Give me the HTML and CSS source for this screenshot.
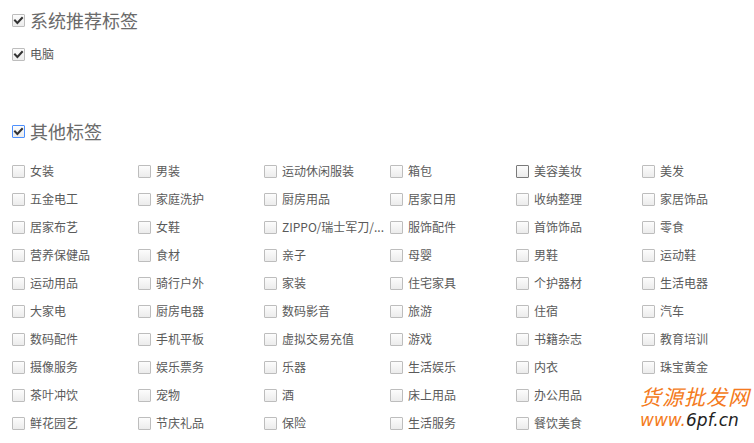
FILE: index.html
```html
<!DOCTYPE html>
<html lang="zh">
<head>
<meta charset="utf-8">
<link rel="stylesheet" href="styles.css">
</head>
<body>
<div class="page">
  <section class="sec sec-rec">
    <div class="head">
      <span class="cb checked"><svg viewBox="0 0 13 13"><path d="M3 6.5 L5.4 9 L10 4" /></svg></span>
      <span class="head-text">系统推荐标签</span>
    </div>
    <div class="item rec-item">
      <span class="cb checked"><svg viewBox="0 0 13 13"><path d="M3 6.5 L5.4 9 L10 4" /></svg></span>
      <span class="label">电脑</span>
    </div>
  </section>

  <section class="sec sec-other">
    <div class="head">
      <span class="cb checked focus"><svg viewBox="0 0 13 13"><path d="M3 6.5 L5.4 9 L10 4" /></svg></span>
      <span class="head-text">其他标签</span>
    </div>
    <div class="grid">
      <div class="item"><span class="cb"></span><span class="label">女装</span></div>
      <div class="item"><span class="cb"></span><span class="label">男装</span></div>
      <div class="item"><span class="cb"></span><span class="label">运动休闲服装</span></div>
      <div class="item"><span class="cb"></span><span class="label">箱包</span></div>
      <div class="item"><span class="cb hover"></span><span class="label">美容美妆</span></div>
      <div class="item"><span class="cb"></span><span class="label">美发</span></div>

      <div class="item"><span class="cb"></span><span class="label">五金电工</span></div>
      <div class="item"><span class="cb"></span><span class="label">家庭洗护</span></div>
      <div class="item"><span class="cb"></span><span class="label">厨房用品</span></div>
      <div class="item"><span class="cb"></span><span class="label">居家日用</span></div>
      <div class="item"><span class="cb"></span><span class="label">收纳整理</span></div>
      <div class="item"><span class="cb"></span><span class="label">家居饰品</span></div>

      <div class="item"><span class="cb"></span><span class="label">居家布艺</span></div>
      <div class="item"><span class="cb"></span><span class="label">女鞋</span></div>
      <div class="item"><span class="cb"></span><span class="label">ZIPPO/瑞士军刀/...</span></div>
      <div class="item"><span class="cb"></span><span class="label">服饰配件</span></div>
      <div class="item"><span class="cb"></span><span class="label">首饰饰品</span></div>
      <div class="item"><span class="cb"></span><span class="label">零食</span></div>

      <div class="item"><span class="cb"></span><span class="label">营养保健品</span></div>
      <div class="item"><span class="cb"></span><span class="label">食材</span></div>
      <div class="item"><span class="cb"></span><span class="label">亲子</span></div>
      <div class="item"><span class="cb"></span><span class="label">母婴</span></div>
      <div class="item"><span class="cb"></span><span class="label">男鞋</span></div>
      <div class="item"><span class="cb"></span><span class="label">运动鞋</span></div>

      <div class="item"><span class="cb"></span><span class="label">运动用品</span></div>
      <div class="item"><span class="cb"></span><span class="label">骑行户外</span></div>
      <div class="item"><span class="cb"></span><span class="label">家装</span></div>
      <div class="item"><span class="cb"></span><span class="label">住宅家具</span></div>
      <div class="item"><span class="cb"></span><span class="label">个护器材</span></div>
      <div class="item"><span class="cb"></span><span class="label">生活电器</span></div>

      <div class="item"><span class="cb"></span><span class="label">大家电</span></div>
      <div class="item"><span class="cb"></span><span class="label">厨房电器</span></div>
      <div class="item"><span class="cb"></span><span class="label">数码影音</span></div>
      <div class="item"><span class="cb"></span><span class="label">旅游</span></div>
      <div class="item"><span class="cb"></span><span class="label">住宿</span></div>
      <div class="item"><span class="cb"></span><span class="label">汽车</span></div>

      <div class="item"><span class="cb"></span><span class="label">数码配件</span></div>
      <div class="item"><span class="cb"></span><span class="label">手机平板</span></div>
      <div class="item"><span class="cb"></span><span class="label">虚拟交易充值</span></div>
      <div class="item"><span class="cb"></span><span class="label">游戏</span></div>
      <div class="item"><span class="cb"></span><span class="label">书籍杂志</span></div>
      <div class="item"><span class="cb"></span><span class="label">教育培训</span></div>

      <div class="item"><span class="cb"></span><span class="label">摄像服务</span></div>
      <div class="item"><span class="cb"></span><span class="label">娱乐票务</span></div>
      <div class="item"><span class="cb"></span><span class="label">乐器</span></div>
      <div class="item"><span class="cb"></span><span class="label">生活娱乐</span></div>
      <div class="item"><span class="cb"></span><span class="label">内衣</span></div>
      <div class="item"><span class="cb"></span><span class="label">珠宝黄金</span></div>

      <div class="item"><span class="cb"></span><span class="label">茶叶冲饮</span></div>
      <div class="item"><span class="cb"></span><span class="label">宠物</span></div>
      <div class="item"><span class="cb"></span><span class="label">酒</span></div>
      <div class="item"><span class="cb"></span><span class="label">床上用品</span></div>
      <div class="item"><span class="cb"></span><span class="label">办公用品</span></div>
      <div class="item"></div>

      <div class="item"><span class="cb"></span><span class="label">鲜花园艺</span></div>
      <div class="item"><span class="cb"></span><span class="label">节庆礼品</span></div>
      <div class="item"><span class="cb"></span><span class="label">保险</span></div>
      <div class="item"><span class="cb"></span><span class="label">生活服务</span></div>
      <div class="item"><span class="cb"></span><span class="label">餐饮美食</span></div>
    </div>
  </section>

  <div class="watermark">
    <div class="wm-cn">货源批发网</div>
    <div class="wm-url"><span class="wm-o">www.</span><span class="wm-d">6pf.cn</span></div>
  </div>
</div>
</body>
</html>
```

FILE: styles.css
```css
html, body {
  margin: 0;
  padding: 0;
  background: #fff;
}

body {
  font-family: "Noto Sans CJK SC", "Noto Sans", sans-serif;
  color: #555;
  width: 754px;
  height: 443px;
  overflow: hidden;
}

.page {
  position: relative;
  padding: 6px 0 0 12px;
  height: 437px;
}

.head {
  display: flex;
  align-items: center;
  height: 28px;
}

.head-text {
  margin-left: 5px;
  font-size: 18px;
  color: #6a6a6a;
  line-height: 28px;
}

.rec-item {
  margin-top: 10px;
  height: 20px;
}

.sec-other {
  margin-top: 53px;
}

.grid {
  margin-top: 12px;
  display: grid;
  grid-template-columns: repeat(6, 126px);
  grid-auto-rows: 28px;
}

.item {
  display: flex;
  align-items: center;
  min-width: 0;
}

.label {
  margin-left: 5px;
  font-size: 12px;
  line-height: 16px;
  white-space: nowrap;
  overflow: hidden;
  max-width: 104px;
  color: #5a5a5a;
}

.cb {
  flex: none;
  box-sizing: border-box;
  width: 13px;
  height: 13px;
  border: 1px solid #bdbdbd;
  border-radius: 1px;
  background: linear-gradient(#fcfcfc, #ececec);
  display: inline-flex;
  align-items: center;
  justify-content: center;
}

.cb svg {
  width: 13px;
  height: 13px;
  flex: none;
}

.cb svg path {
  fill: none;
  stroke: #333;
  stroke-width: 2;
  stroke-linecap: square;
}

.cb.focus {
  border-color: #4d90fe;
}

.cb.hover {
  border-color: #7a7a7a;
}

.watermark {
  position: absolute;
  left: 636px;
  top: 383px;
  width: 118px;
  height: 52px;
  background: #fff;
}

.wm-cn {
  font-family: "Noto Sans CJK SC", sans-serif;
  font-size: 21px;
  line-height: 26px;
  color: #f47a20;
  letter-spacing: 1px;
  padding-left: 4px;
  font-style: italic;
}

.wm-url {
  font-family: "DejaVu Sans", sans-serif;
  font-size: 17px;
  line-height: 22px;
  padding-left: 4px;
  font-style: italic;
}

.wm-o {
  color: #f47a20;
}

.wm-d {
  color: #222;
}
```
